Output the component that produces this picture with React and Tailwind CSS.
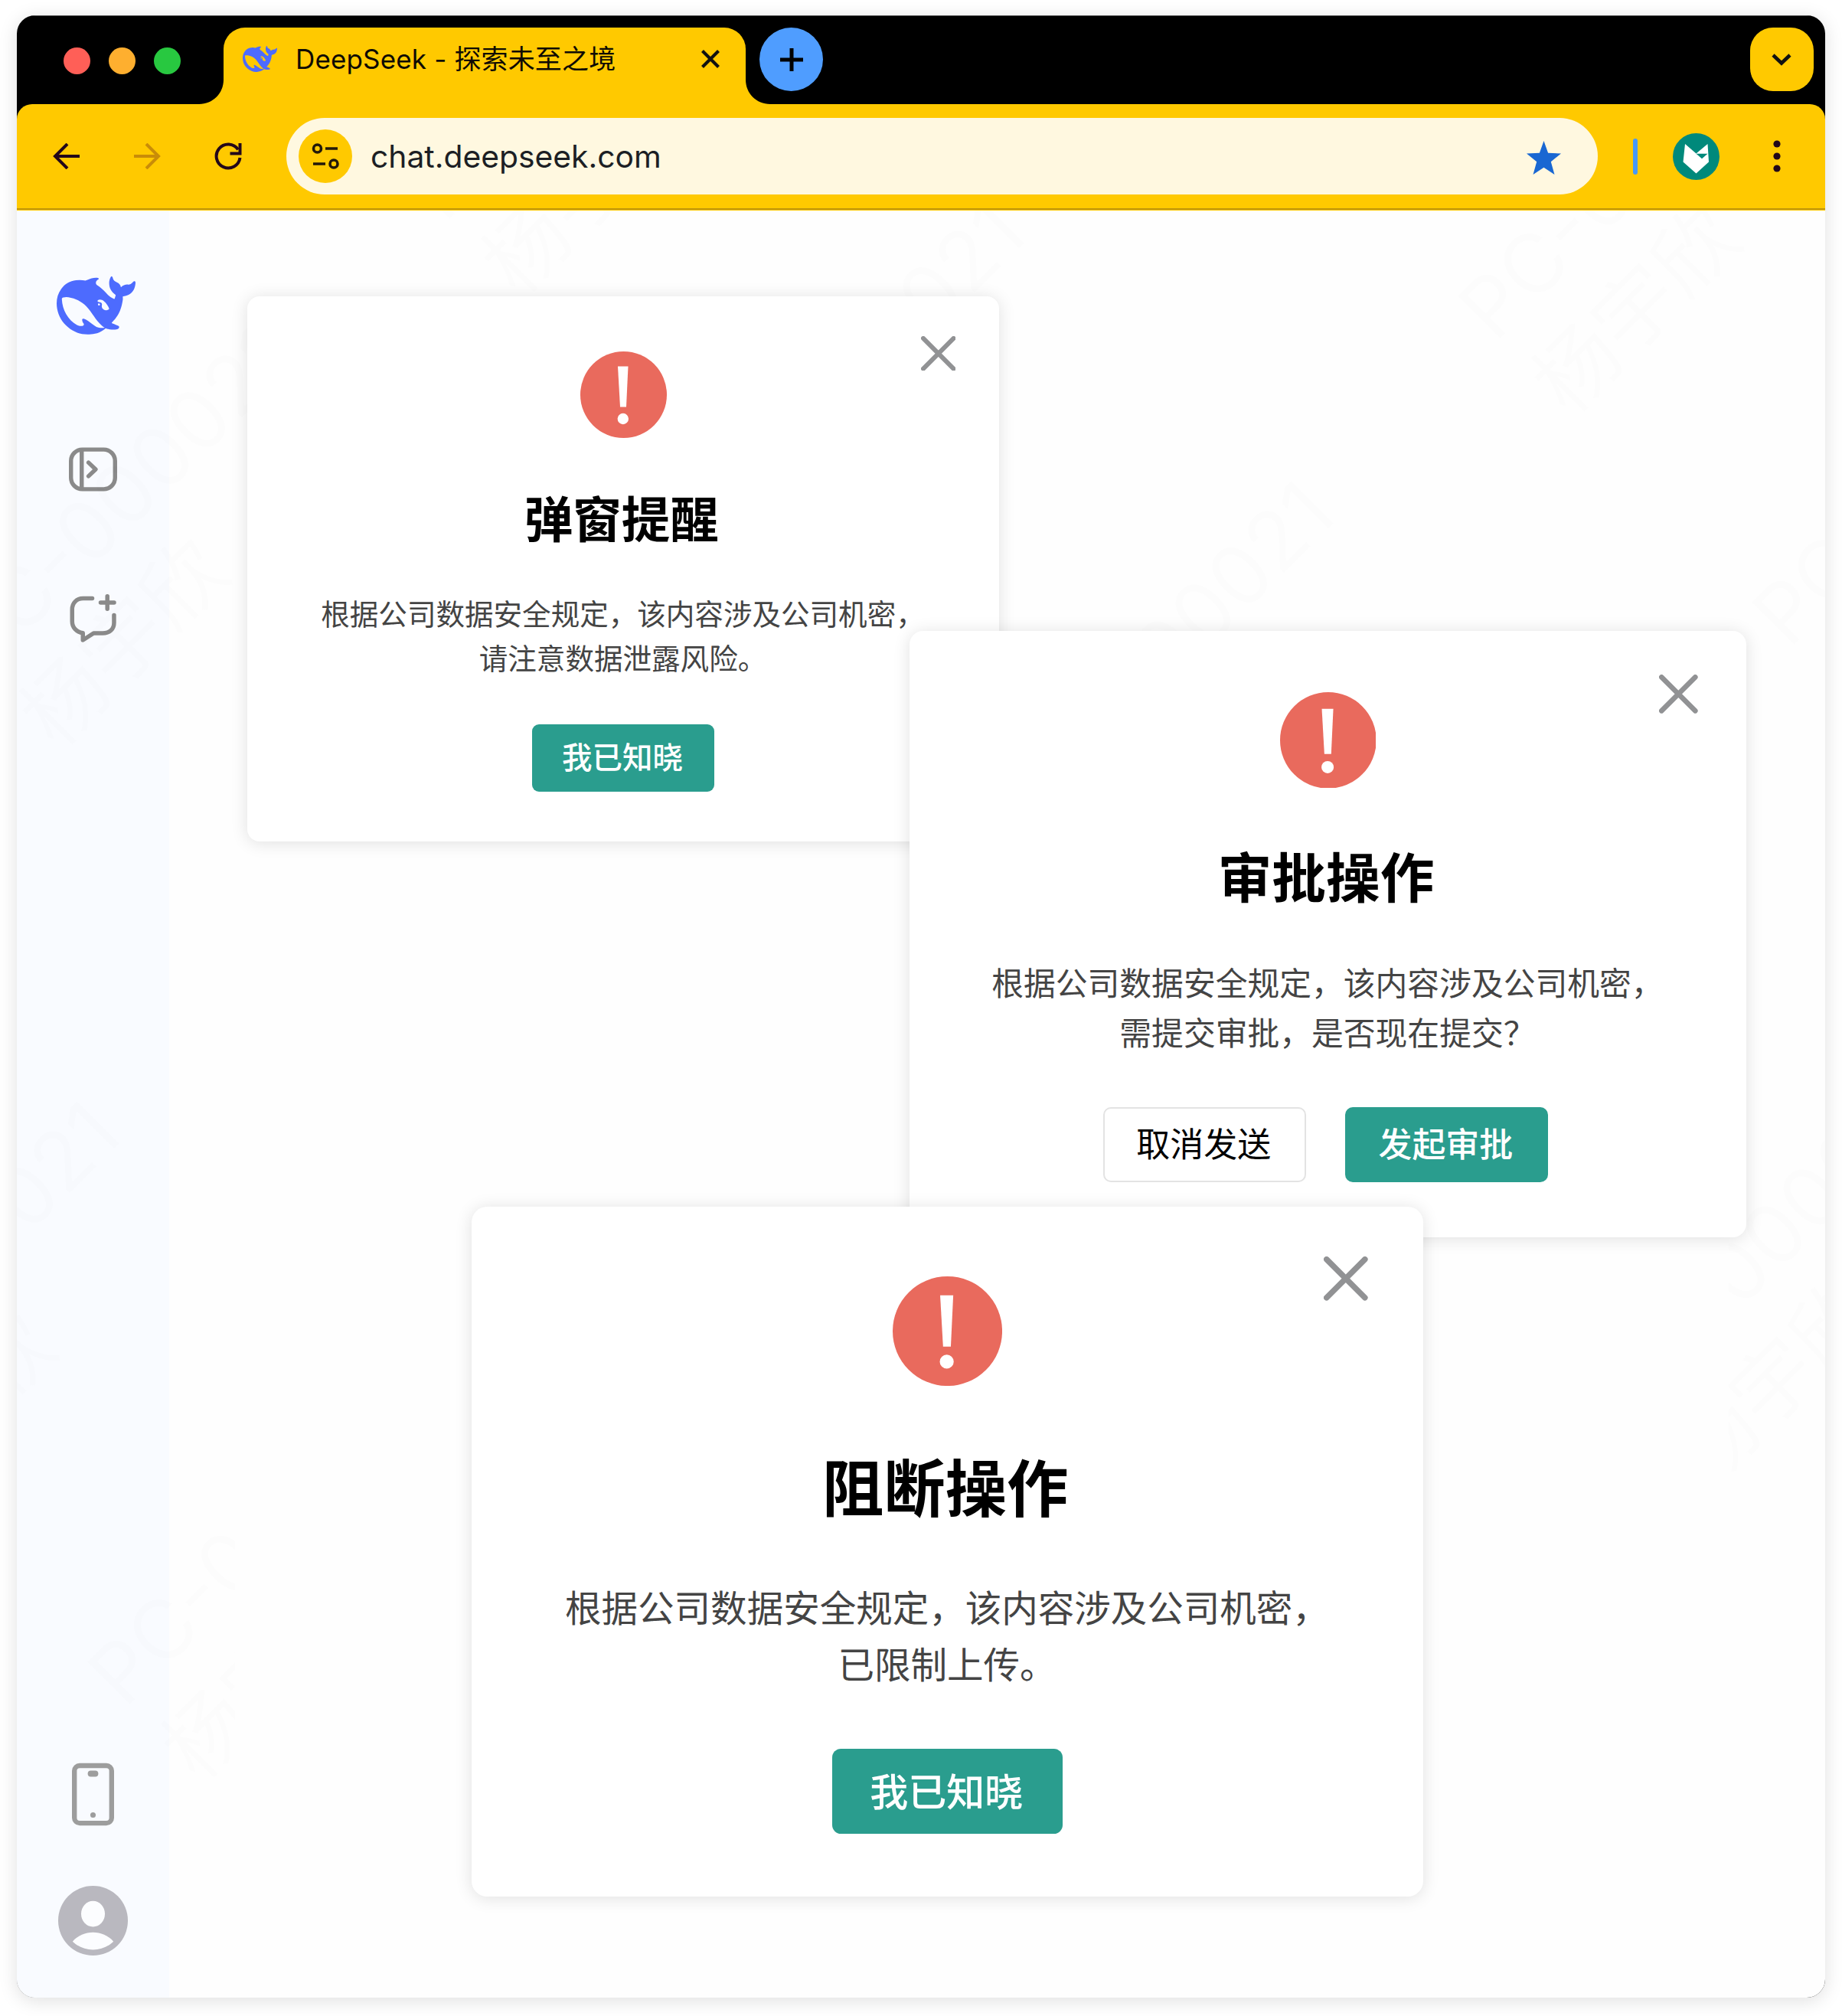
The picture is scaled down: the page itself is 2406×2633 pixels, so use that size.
import React from "react";

const WHALE_PATH =
  "M23.748 4.482c-.254-.124-.364.113-.512.234-.051.039-.094.09-.137.136-.372.397-.806.657-1.373.626-.829-.046-1.537.214-2.163.848-.133-.782-.575-1.248-1.247-1.548-.352-.156-.708-.311-.955-.65-.172-.241-.219-.51-.305-.774-.055-.16-.11-.323-.293-.35-.2-.031-.278.136-.356.276-.313.572-.434 1.202-.422 1.84.027 1.436.633 2.58 1.838 3.393.137.093.172.187.129.323-.082.28-.18.552-.266.833-.055.179-.137.217-.329.14a5.526 5.526 0 01-1.736-1.18c-.857-.828-1.631-1.742-2.597-2.458a11.365 11.365 0 00-.689-.471c-.985-.957.13-1.743.388-1.836.27-.098.093-.432-.779-.428-.872.004-1.67.295-2.687.684a3.055 3.055 0 01-.465.137 9.597 9.597 0 00-2.883-.102c-1.885.21-3.39 1.102-4.497 2.623C.082 8.606-.231 10.684.152 12.85c.403 2.284 1.569 4.175 3.36 5.653 1.858 1.533 3.997 2.284 6.438 2.14 1.482-.085 3.133-.284 4.994-1.86.47.234.962.327 1.78.397.63.059 1.236-.03 1.705-.128.735-.156.684-.837.419-.961-2.155-1.004-1.682-.595-2.113-.926 1.096-1.296 2.746-2.642 3.392-7.003.05-.347.007-.565 0-.845-.004-.17.035-.237.23-.256a4.173 4.173 0 001.545-.475c1.396-.763 1.96-2.015 2.093-3.517.02-.23-.004-.467-.247-.588zM11.581 18c-2.089-1.642-3.102-2.183-3.52-2.16-.392.024-.321.471-.235.763.09.288.207.486.371.739.114.167.192.416-.113.603-.673.416-1.842-.14-1.897-.167-1.361-.802-2.5-1.86-3.301-3.307-.774-1.393-1.224-2.887-1.298-4.482-.02-.386.093-.522.477-.592a4.696 4.696 0 011.529-.039c2.132.312 3.946 1.265 5.468 2.774.868.86 1.525 1.887 2.202 2.891.72 1.066 1.494 2.082 2.48 2.914.348.292.625.514.891.677-.802.09-2.14.11-3.054-.614zm1-6.44a.306.306 0 01.415-.287.302.302 0 01.2.288.306.306 0 01-.31.307.303.303 0 01-.304-.308zm3.11 1.596c-.2.081-.399.151-.59.16a1.245 1.245 0 01-.798-.254c-.274-.23-.47-.358-.552-.758a1.73 1.73 0 01.016-.588c.07-.327-.008-.537-.239-.727-.187-.156-.426-.199-.688-.199a.559.559 0 01-.254-.078c-.11-.054-.2-.19-.114-.358.028-.054.16-.186.192-.21.356-.202.767-.136 1.146.016.352.144.618.408 1.001.782.391.451.462.576.685.914.176.265.336.537.445.848.067.195-.019.354-.25.452z";

const Whale = ({ className }) => (
  <svg viewBox="0 3 24 17.7" preserveAspectRatio="none" className={className} fill="#4d6bfe">
    <path d={WHALE_PATH} />
  </svg>
);

const TabBar = () => (
  <div className="flex h-[116px] items-start border-t border-[#5a5a5a] pr-[15px] pl-[61px]">
    <div className="flex gap-6 pt-[41px]">
      <span className="size-[35px] rounded-full bg-[#ff5f57]" />
      <span className="size-[35px] rounded-full bg-[#feaf2f]" />
      <span className="size-[35px] rounded-full bg-[#28c840]" />
    </div>

    {/* Active tab */}
    <div className="relative mt-[15px] ml-[56px] flex h-[100px] w-[682px] items-start rounded-t-[28px] bg-[#ffc900] pt-[18px] pr-[34px] pl-[25px]">
      <svg viewBox="0 0 32 32" className="absolute bottom-0 -left-8 size-8" fill="#ffc900">
        <path d="M32 0v32H0C18 32 32 18 32 0z" />
      </svg>
      <svg viewBox="0 0 32 32" className="absolute -right-8 bottom-0 size-8" fill="#ffc900">
        <path d="M0 0v32h32C14 32 0 18 0 0z" />
      </svg>
      <Whale className="mt-1.5 h-[34px] w-[45px]" />
      <span className="ml-6 text-[35px] leading-[46px] tracking-[0.15px] whitespace-nowrap text-[#0f0b04]">
        DeepSeek - 探索未至之境
      </span>
      <svg viewBox="0 0 24 24" className="mt-[11px] ml-auto size-6" stroke="#111" strokeWidth="4.2">
        <path d="M1.5 1.5l21 21M22.5 1.5l-21 21" />
      </svg>
    </div>

    <button className="mt-[15px] ml-[18px] flex size-[83px] items-center justify-center rounded-full bg-[#4f9dff]">
      <svg viewBox="0 0 30 30" className="size-[30px]" stroke="#000" strokeWidth="5">
        <path d="M15 0v30M0 15h30" />
      </svg>
    </button>

    <button className="mt-[15px] ml-auto flex size-[83px] items-center justify-center rounded-[30px] bg-[#ffc900] pr-px">
      <svg viewBox="0 0 26 16" className="h-4 w-[26px]" fill="none" stroke="#111" strokeWidth="4.6">
        <path d="M2 2l11 10.500L24 2" />
      </svg>
    </button>
  </div>
);

const Toolbar = () => (
  <div className="flex h-[139px] items-center rounded-t-[20px] bg-[#ffc900] pb-[3px] pl-[47px] shadow-[inset_0_-1px_0_#ffc900,inset_0_-3px_0_#c0960a]">
    <svg viewBox="0 0 35 34" className="h-[34px] w-[35px]" fill="none" stroke="#23071a" strokeWidth="4">
      <path d="M35 17H3M19 1L3 17l16 16" />
    </svg>
    <svg viewBox="0 0 35 34" className="ml-[71px] h-[34px] w-[35px]" fill="none" stroke="#c98c08" strokeWidth="4">
      <path d="M0 17h32M16 1l16 16-16 16" />
    </svg>
    <svg viewBox="0 0 36 36" className="ml-[70px] size-9" fill="none" stroke="#23071a" strokeWidth="4">
      <path d="M33.500 20A15.500 15.500 0 1 1 31 9.300" />
      <path d="M33.500 1v13.500H20.500" />
    </svg>

    {/* Address bar */}
    <div className="ml-[58px] flex h-[100px] w-[1713px] items-center rounded-full bg-[#fff8e0] pr-[48px] pl-4">
      <div className="flex size-[70px] items-center justify-center rounded-full bg-[#ffc900]">
        <svg viewBox="0 0 38 36" className="h-9 w-[38px]" fill="none" stroke="#23190a" strokeWidth="3.600">
          <circle cx="8.500" cy="8" r="5" />
          <path d="M19 8h16M3 28h16" />
          <circle cx="30" cy="28" r="5" />
        </svg>
      </div>
      <span className="mt-px ml-6 text-[40.800px] whitespace-nowrap text-[#1c1f24]">
        chat.deepseek.com
      </span>
      <svg viewBox="0 0 45 44" className="mt-1 ml-auto h-11 w-[45px]" fill="#1967d2">
        <path d="M22.500 0l5.600 15.800L45 16.500 31.800 27.300 36.500 44 22.500 34.800 8.500 44l4.700-16.700L0 16.500l16.900-.7z" />
      </svg>
    </div>

    <span className="ml-[46px] h-[47px] w-1.5 rounded-full bg-[#4798f8]" />

    <svg viewBox="0 0 61 61" className="ml-[46px] size-[61px]">
      <circle cx="30.500" cy="30.500" r="30.500" fill="#00897b" />
      <path d="M16 14l14.500 12.500L45.500 14l1.500 23.500L30.500 52.500 13.500 37.500z" fill="#fff" />
      <path d="M30.500 26.800h15l-7.500 6.500z" fill="#00897b" />
    </svg>

    <svg viewBox="0 0 10 42" className="ml-[70px] h-[42px] w-2.5" fill="#23071a">
      <circle cx="5" cy="5" r="4.600" />
      <circle cx="5" cy="21" r="4.600" />
      <circle cx="5" cy="37" r="4.600" />
    </svg>
  </div>
);

const Sidebar = () => (
  <aside className="flex w-[199px] flex-col bg-[#f9fbff] pb-[55px]">
    <Whale className="mt-[86px] ml-[52px] h-[76px] w-[103px]" />

    {/* Expand sidebar */}
    <svg viewBox="0 0 64 58" className="mt-[147px] ml-[68px] h-[58px] w-[63px]" fill="none" stroke="#8a8a8a" strokeWidth="5.500">
      <rect x="2.750" y="2.750" width="58.500" height="52.500" rx="15" />
      <path d="M17 3v52" />
      <path d="M26 20l9.500 9-9.500 9" strokeLinecap="round" strokeLinejoin="round" />
    </svg>

    {/* New chat */}
    <svg
      viewBox="0 0 62 64"
      className="mt-[134px] ml-[69px] h-16 w-[62px]"
      fill="none"
      stroke="#8a8a8a"
      strokeWidth="5.500"
      strokeLinecap="round"
      strokeLinejoin="round"
    >
      <path d="M29.500 5.500H17.500C9 5.500 3.250 11.500 3.250 20v15.500c0 8 5.500 14 14 15.200V60l14-9h12c9 0 14.700-5.500 14.700-13.500V27.500" />
      <path d="M40.500 11h17.500M49.200 2.750v16.500" />
    </svg>

    {/* Mobile app */}
    <svg viewBox="0 0 56 83" className="mt-auto ml-[72px] h-[83px] w-[55px]" fill="none">
      <rect x="3.250" y="3.250" width="49.500" height="76.500" rx="7" stroke="#9d9d9d" strokeWidth="6.500" />
      <rect x="21" y="10" width="14" height="8" rx="4" fill="#9d9d9d" />
      <circle cx="28" cy="69" r="3.600" fill="#9d9d9d" />
    </svg>

    {/* User avatar */}
    <svg viewBox="0 0 92 92" className="mt-[78px] ml-[54px] size-[91px]">
      <circle cx="46" cy="46" r="46" fill="#b9b8bf" />
      <ellipse cx="46" cy="37" rx="15.700" ry="17" fill="#fcfdff" />
      <path d="M19 73.500C33 57.500 59 57.500 73 73.500 58 88 34 88 19 73.500z" fill="#fcfdff" />
    </svg>
  </aside>
);

// Centre of each repeated mark, relative to the content area
const MARKS = [
  "left-[133px] top-[376px]",
  "left-[736px] top-[-215px]",
  "left-[1090px] top-[213px]",
  "left-[1494px] top-[579px]",
  "left-[2108px] top-[-59px]",
  "left-[2492px] top-[341px]",
  "left-[-92px] top-[1389px]",
  "left-[2288px] top-[1343px]",
  "left-[318px] top-[1725px]",
];

const Watermark = () => (
  <div aria-hidden="true" className="pointer-events-none absolute inset-0 overflow-hidden select-none">
    {MARKS.map((pos) => (
      <div key={pos} className={`absolute size-0 ${pos}`}>
        <div className="h-[137px] w-[580px] -translate-x-1/2 -translate-y-1/2 -rotate-45 text-[108px] leading-[137px] whitespace-nowrap text-black/[0.008]">
          PC-000021
          <br />
          杨宇欣
        </div>
      </div>
    ))}
    {/* Keeps the lower half of the page clear of marks */}
    <div className="absolute top-[850px] right-[126px] bottom-0 left-[285px] bg-[#fefefe]" />
  </div>
);

// Every length is in em, so the font size of a dialog sets its scale
const Dialog = ({ className, title, lines, cancelText, okText }) => (
  <div
    className={`absolute flex h-[71.2em] w-[98.2em] flex-col items-center rounded-[1.6em] bg-white pt-[7.15em] shadow-[0_2px_22px_rgba(0,0,0,0.12)] ${className}`}
  >
    <button className="absolute top-[5.15em] right-[5.7em]">
      <svg viewBox="0 0 46 46" className="size-[4.55em]" stroke="#919294" strokeWidth="6" strokeLinecap="round">
        <path d="M3 3l40 40M43 3L3 43" />
      </svg>
    </button>

    <svg viewBox="0 0 113 113" className="size-[11.3em] shrink-0">
      <circle cx="56.500" cy="56.500" r="56.500" fill="#e96a5d" />
      <path d="M49 19.500h13.500L60 72.500h-8z" fill="#fff" />
      <circle cx="55.800" cy="88" r="7.200" fill="#fff" />
    </svg>

    <h2 className="mt-[7.55em] h-[6.4em] pr-[0.45em] leading-none whitespace-nowrap">
      <span className="text-[6.35em] leading-none font-bold text-black">{title}</span>
    </h2>

    <div className="mt-[6.15em] h-[11.76em] pr-[0.1em] text-center">
      {lines.map((line) => (
        <p key={line} className="h-[5.84em] whitespace-nowrap">
          <span className="block text-[3.755em] leading-[1.573] text-[#444]">{line}</span>
        </p>
      ))}
    </div>

    <div className={`mt-[5.6em] flex gap-[4.65em] ${cancelText ? "mr-[0.55em]" : ""}`}>
      {cancelText && (
        <button className="flex h-[8.8em] w-[23.75em] items-center justify-center rounded-[0.9em] border-2 border-[#e3e3e3] bg-white pt-[0.2em] pr-[0.2em] text-black">
          <span className="text-[3.95em] leading-none">{cancelText}</span>
        </button>
      )}
      <button className="flex h-[8.8em] w-[23.75em] items-center justify-center rounded-[0.9em] bg-[#2a9d8e] pt-[0.2em] pr-[0.2em] text-white">
        <span className="text-[3.95em] leading-none font-medium">{okText}</span>
      </button>
    </div>
  </div>
);

const App = () => {
  return (
    <div className="h-[2633px] w-[2406px] bg-white px-[22px] pt-5 font-[Inter,'Noto_Sans_CJK_SC',sans-serif]">
      <div className="flex h-[2589px] flex-col overflow-hidden rounded-[24px] bg-black shadow-[0_4px_24px_rgba(0,0,0,0.13)]">
        <TabBar />
        <Toolbar />
        <div className="relative flex flex-1 bg-[#fefefe]">
          <Sidebar />
          <Watermark />
          <Dialog
            className="top-[112px] left-[301px] text-[10px]"
            title="弹窗提醒"
            lines={["根据公司数据安全规定，该内容涉及公司机密，", "请注意数据泄露风险。"]}
            okText="我已知晓"
          />
          <Dialog
            className="top-[549px] left-[1166px] text-[11.13px]"
            title="审批操作"
            lines={["根据公司数据安全规定，该内容涉及公司机密，", "需提交审批，是否现在提交？"]}
            cancelText="取消发送"
            okText="发起审批"
          />
          <Dialog
            className="top-[1301px] left-[594px] text-[12.66px]"
            title="阻断操作"
            lines={["根据公司数据安全规定，该内容涉及公司机密，", "已限制上传。"]}
            okText="我已知晓"
          />
        </div>
      </div>
    </div>
  );
};

export default App;
